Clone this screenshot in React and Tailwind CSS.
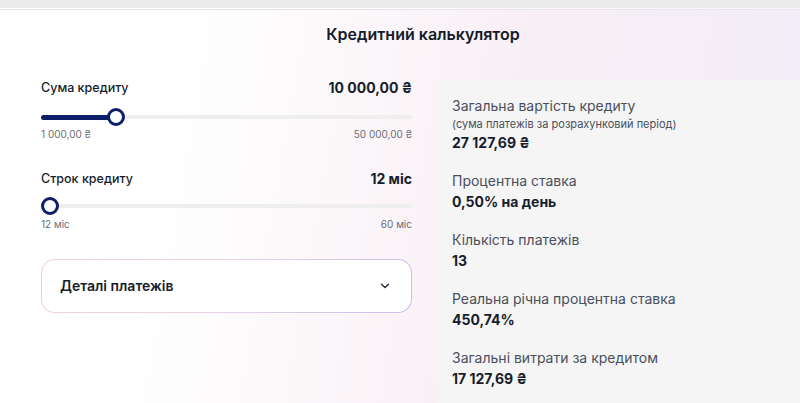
import React from "react";

function Slider({ pct }) {
  return (
    <div className="relative h-[18px] w-full flex items-center">
      <div className="h-[4px] w-full rounded-full bg-[#eeeeef]" />
      <div
        className="absolute left-0 h-[5px] rounded-full bg-[#0d1f68]"
        style={{ width: `${pct}%` }}
      />
      <div
        className="absolute top-0 h-[18px] w-[18px] rounded-full border-[3px] border-[#0d1f68] bg-white"
        style={{ left: `calc(${pct}% - ${pct === 0 ? 0 : 9}px)` }}
      />
    </div>
  );
}

function Stat({ label, sub, value }) {
  return (
    <div className="flex flex-col">
      <div className="text-sm leading-5 text-[#4a4f5c]">{label}</div>
      {sub && <div className="text-[11px] leading-4 text-[#4a4f5c]">{sub}</div>}
      <div className="mt-px text-sm font-bold leading-5 text-[#161d2c]">{value}</div>
    </div>
  );
}

export default function App() {
  return (
    <div
      className="relative h-[403px] w-[800px] overflow-hidden bg-[linear-gradient(100deg,#ffffff_22%,#fbf6f9_45%,#f8eff5_62%,#f2edfa_100%)]"
      style={{ fontFamily: "Inter, 'Noto Sans', sans-serif" }}
    >
      <div className="h-[8px] w-full bg-[#ececec]" />
      <div className="h-px w-full bg-white/60" />
      <div className="h-px w-full bg-[#e6e4e8]" />
      <div className="flex justify-center pl-[46px] pt-3 pb-8">
        <h1 className="text-base font-semibold leading-6 text-[#141b2b]">Кредитний калькулятор</h1>
      </div>
      <div className="flex items-start">
        <div className="ml-[41px] flex w-[371px] flex-col">
          <div className="flex h-5 items-center justify-between">
            <span className="text-[12.5px] font-medium text-[#161d2c]">Сума кредиту</span>
            <span className="text-sm font-bold text-[#161d2c]">10 000,00 ₴</span>
          </div>
          <div className="mt-2.5">
            <Slider pct={20.2} />
          </div>
          <div className="mt-px flex h-[14px] items-center justify-between text-[10px] text-[#6b6e76]">
            <span>1 000,00 ₴</span>
            <span>50 000,00 ₴</span>
          </div>
          <div className="mt-7 flex h-5 items-center justify-between">
            <span className="text-[12.5px] font-medium text-[#161d2c]">Строк кредиту</span>
            <span className="text-sm font-bold text-[#161d2c]">12 міс</span>
          </div>
          <div className="mt-2">
            <Slider pct={0} />
          </div>
          <div className="mt-0.5 flex h-[14px] items-center justify-between text-[10px] text-[#6b6e76]">
            <span>12 міс</span>
            <span>60 міс</span>
          </div>
          <div className="mt-7 rounded-[14px] bg-[linear-gradient(110deg,#f3cfd2_0%,#e6d0e6_50%,#c6bff3_100%)] p-px">
            <div className="flex h-[52px] items-center justify-between rounded-[13px] bg-white pl-[18px] pr-[21px]">
              <span className="text-sm font-semibold text-[#161d2c]">Деталі платежів</span>
              <svg width="10" height="6" viewBox="0 0 10 6" fill="none">
                <path d="M1.5 1.2L5 4.5L8.5 1.2" stroke="#2a3142" strokeWidth="1.5" strokeLinecap="round" strokeLinejoin="round" />
              </svg>
            </div>
          </div>
        </div>
        <div className="ml-[25px] mt-0.5 flex h-[323px] flex-1 flex-col gap-[18px] bg-[#f5f5f5] pl-[15px] pt-4">
          <Stat
            label="Загальна вартість кредиту"
            sub="(сума платежів за розрахунковий період)"
            value="27 127,69 ₴"
          />
          <Stat label="Процентна ставка" value="0,50% на день" />
          <Stat label="Кількість платежів" value="13" />
          <Stat label="Реальна річна процентна ставка" value="450,74%" />
          <Stat label="Загальні витрати за кредитом" value="17 127,69 ₴" />
        </div>
      </div>
    </div>
  );
}
